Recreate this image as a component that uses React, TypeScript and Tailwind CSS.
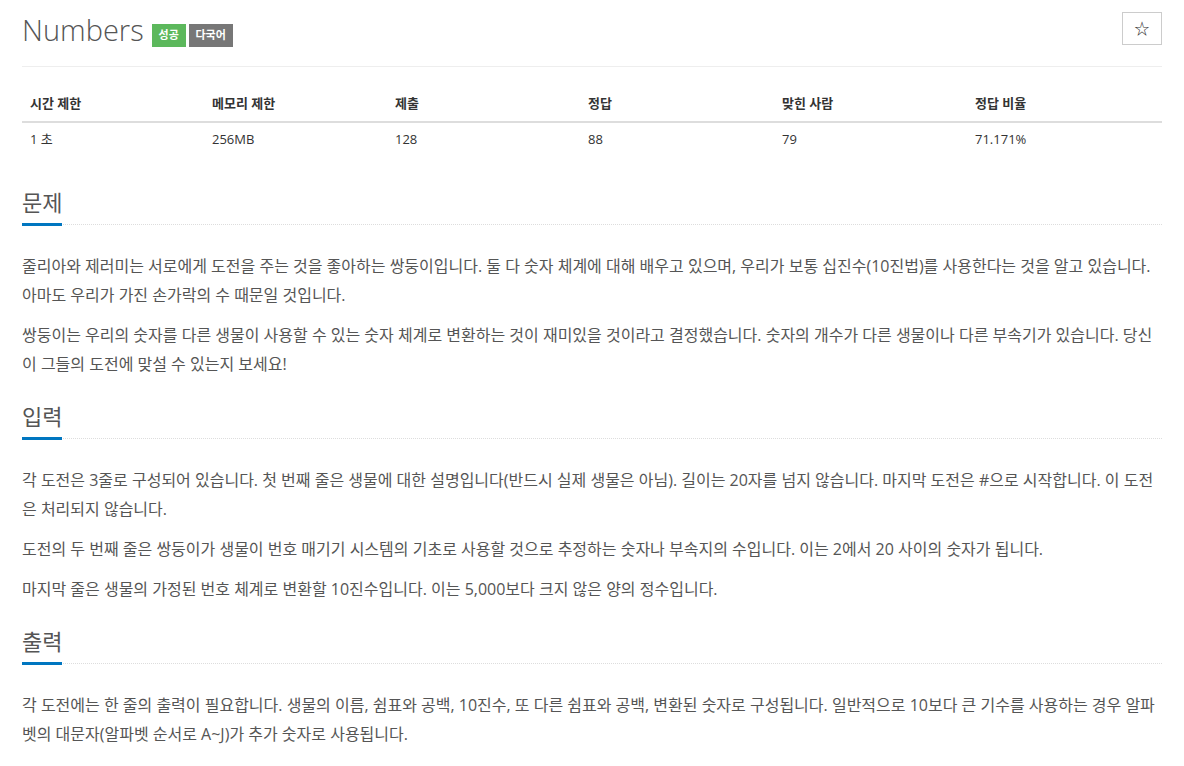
import React from "react";

const font = {
  fontFamily: '"Open Sans", "Noto Sans CJK KR", sans-serif',
};

const stats = [
  { label: "시간 제한", value: "1 초", width: "w-[182px]" },
  { label: "메모리 제한", value: "256MB", width: "w-[183px]" },
  { label: "제출", value: "128", width: "w-[193px]" },
  { label: "정답", value: "88", width: "w-[194px]" },
  { label: "맞힌 사람", value: "79", width: "w-[193px]" },
  { label: "정답 비율", value: "71.171%", width: "" },
];

// each paragraph is listed line by line, breaking where the page breaks
const sections: { title: string; paragraphs: string[][] }[] = [
  {
    title: "문제",
    paragraphs: [
      [
        "줄리아와 제러미는 서로에게 도전을 주는 것을 좋아하는 쌍둥이입니다. 둘 다 숫자 체계에 대해 배우고 있으며, 우리가 보통 십진수(10진법)를 사용한다는 것을 알고 있습니다.",
        "아마도 우리가 가진 손가락의 수 때문일 것입니다.",
      ],
      [
        "쌍둥이는 우리의 숫자를 다른 생물이 사용할 수 있는 숫자 체계로 변환하는 것이 재미있을 것이라고 결정했습니다. 숫자의 개수가 다른 생물이나 다른 부속기가 있습니다. 당신",
        "이 그들의 도전에 맞설 수 있는지 보세요!",
      ],
    ],
  },
  {
    title: "입력",
    paragraphs: [
      [
        "각 도전은 3줄로 구성되어 있습니다. 첫 번째 줄은 생물에 대한 설명입니다(반드시 실제 생물은 아님). 길이는 20자를 넘지 않습니다. 마지막 도전은 #으로 시작합니다. 이 도전",
        "은 처리되지 않습니다.",
      ],
      [
        "도전의 두 번째 줄은 쌍둥이가 생물이 번호 매기기 시스템의 기초로 사용할 것으로 추정하는 숫자나 부속지의 수입니다. 이는 2에서 20 사이의 숫자가 됩니다.",
      ],
      [
        "마지막 줄은 생물의 가정된 번호 체계로 변환할 10진수입니다. 이는 5,000보다 크지 않은 양의 정수입니다.",
      ],
    ],
  },
  {
    title: "출력",
    paragraphs: [
      [
        "각 도전에는 한 줄의 출력이 필요합니다. 생물의 이름, 쉼표와 공백, 10진수, 또 다른 쉼표와 공백, 변환된 숫자로 구성됩니다. 일반적으로 10보다 큰 기수를 사용하는 경우 알파",
        "벳의 대문자(알파벳 순서로 A~J)가 추가 숫자로 사용됩니다.",
      ],
    ],
  },
];

function SectionTitle({ children }: { children: React.ReactNode }) {
  return (
    <div className="flex border-b border-dotted border-[#dddddd]">
      <h2 className="-mb-[2px] border-b-[3px] border-[#0076c0] pb-[8px] text-[22px] leading-[26px] font-normal text-[#555555]">
        {children}
      </h2>
    </div>
  );
}

export default function App() {
  return (
    <div className="min-h-screen bg-white" style={font}>
      <div className="mx-[22px] w-[1140px]">
        <div className="flex items-start justify-between border-b border-[#eeeeee] pt-[12px] pb-[18px]">
          <div className="flex items-end gap-[8px]">
            <h1 className="text-[29px] leading-[36px] font-light text-[#555555]">
              Numbers
            </h1>
            <div className="mb-px flex gap-[3px]">
              <span className="flex h-[23px] w-[34px] items-center justify-center bg-[#5cb85c] text-[11px] font-semibold text-white">
                성공
              </span>
              <span className="flex h-[23px] w-[44px] items-center justify-center bg-[#777777] text-[11px] font-semibold text-white">
                다국어
              </span>
            </div>
          </div>
          <button
            type="button"
            className="flex h-[33px] w-[40px] items-center justify-center border border-[#cccccc] bg-white text-[15px] text-[#333333]"
          >
            ☆
          </button>
        </div>

        <table className="mt-[18px] w-full table-fixed border-collapse text-[13px] text-[#333333]">
          <thead>
            <tr className="border-b-2 border-[#dddddd]">
              {stats.map((s) => (
                <th
                  key={s.label}
                  className={`${s.width} px-[8px] py-[9px] text-left leading-[18px] font-bold`}
                >
                  {s.label}
                </th>
              ))}
            </tr>
          </thead>
          <tbody>
            <tr>
              {stats.map((s) => (
                <td key={s.label} className="px-[8px] pt-[7px] pb-[8px] leading-[18px]">
                  {s.value}
                </td>
              ))}
            </tr>
          </tbody>
        </table>

        <div className="mt-[33px]">
          {sections.map((sec, i) => (
            <section key={sec.title} className={i === 0 ? "" : "mt-[24px]"}>
              <SectionTitle>{sec.title}</SectionTitle>
              <div className="mt-[27px]">
                {sec.paragraphs.map((lines, j) => (
                  <p
                    key={j}
                    className="mb-[11px] whitespace-nowrap text-[16px] leading-[29px] text-[#555555]"
                  >
                    {lines.map((line, k) => (
                      <React.Fragment key={k}>
                        {k > 0 && <br />}
                        {line}
                      </React.Fragment>
                    ))}
                  </p>
                ))}
              </div>
            </section>
          ))}
        </div>
      </div>
    </div>
  );
}
